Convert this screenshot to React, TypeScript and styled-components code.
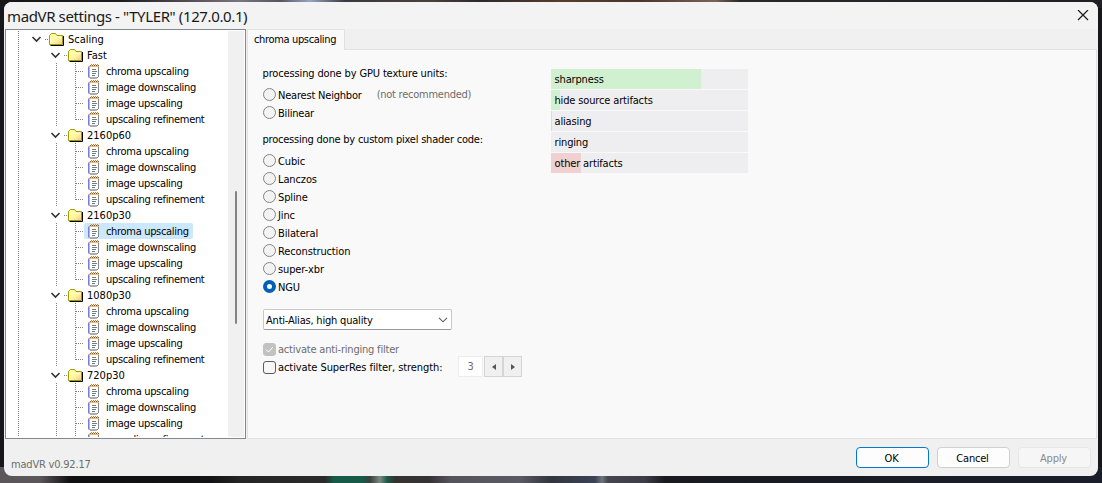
import React from "react";
import styled, { createGlobalStyle } from "styled-components";

const GlobalStyle = createGlobalStyle`
  * { box-sizing: border-box; }
  html, body { margin: 0; height: 100%; overflow: hidden; }
  body {
    background:
      linear-gradient(90deg, #17171a 0, #1c1c1e 120px, #5d5560 200px, #7a7480 240px, #55555f 280px, #98a4c4 310px, #3a3a3e 345px, #4a3f3b 430px, #2c2a2c 480px, #5a3a2c 560px, #4a342c 640px, #7a6258 715px, #28282b 740px, #202024 1102px) 0 0 / 100% 8px no-repeat,
      linear-gradient(90deg, #5a5659 0, #5a5659 40px, #101013 70px, #121214 210px, #262525 240px, #2a2a2a 325px, #175a48 334px, #175a48 362px, #3a403e 370px, #7a8a80 380px, #1d5a48 387px, #35322f 395px, #363336 430px, #55545c 450px, #5a5a64 520px, #33363f 550px, #3a4254 595px, #70747c 602px, #44454e 608px, #3c3d46 645px, #181a20 665px, #1a1e2a 1102px) 0 100% / 100% 16px no-repeat,
      #17171b;
    font-family: "DejaVu Sans Condensed", "DejaVu Sans", sans-serif;
    font-stretch: condensed;
    font-size: 11px;
    letter-spacing: -0.2px;
    color: #000;
  }
`;

const Desktop = styled.div`
  height: 483px;
  width: 1102px;
  padding: 2px 4px 7px;
`;
const Window = styled.div`
  height: 474px;
  background: #f0f0f0;
  border-radius: 8px;
  overflow: hidden;
  display: flex;
  flex-direction: column;
`;
const TitleBar = styled.header`
  height: 27px;
  flex: none;
  display: flex;
  justify-content: space-between;
  align-items: center;
  padding: 0 9px 0 3px;
  background: #f3f3f3;
`;
const Title = styled.h1`
  margin: 0;
  font: 400 15px/26px "Noto Sans", sans-serif;
  color: #191919;
  white-space: nowrap;
  letter-spacing: -0.38px;
`;
const Body = styled.main`
  display: flex;
  height: 410px;
  flex: none;
  padding-left: 1px;
`;
const Tree = styled.aside`
  width: 241px;
  border: 1px solid #828790;
  background: #fff;
  display: flex;
  overflow: hidden;
  padding: 1px 1px 1px 0;
`;
const TreeRows = styled.div`
  flex: 1;
  overflow: hidden;
`;
const ScrollTrack = styled.div`
  width: 16px;
  background: #f0f0f0;
  padding: 160px 0 0 7px;
`;
const ScrollThumb = styled.div`
  width: 2px;
  height: 133px;
  border-radius: 1px;
  background: #858585;
`;
const Row = styled.div`
  display: flex;
  height: 16px;
`;
const Branches = styled.svg`
  flex: none;
  display: block;
`;
const Caption = styled.span<{ $selected?: boolean; $leaf?: boolean }>`
  display: flex;
  align-items: center;
  height: 16px;
  line-height: 16px;
  padding-right: 4px;
  gap: ${(p) => (p.$leaf ? 6 : 4)}px;
  padding-left: ${(p) => (p.$leaf ? 4 : 0)}px;
  letter-spacing: ${(p) => (p.$leaf ? "-0.32px" : "0")};
  border-radius: 2px;
  white-space: nowrap;
  background: ${(p) => (p.$selected ? "#cce8ff" : "transparent")};
`;
const Label = styled.span`
  padding-top: 2px;
`;
const Content = styled.section`
  flex: 1;
  display: flex;
  flex-direction: column;
  padding: 0 1px 0 1px;
`;
const Tab = styled.div`
  width: 98px;
  height: 21px;
  flex: none;
  margin-bottom: -1px;
  z-index: 1;
  padding-left: 6px;
  line-height: 20px;
  letter-spacing: -0.35px;
  white-space: nowrap;
  background: #f9f9f9;
  border: 1px solid #e2e2e2;
  border-bottom: 0;
`;
const Panel = styled.div`
  flex: 1;
  background: #f9f9f9;
  border: 1px solid #e2e2e2;
  display: flex;
  padding: 15px 14px 15px 15px;
`;
const Options = styled.div`
  width: 288px;
  flex: none;
`;
const Heading = styled.div<{ $spacing: number }>`
  height: 20px;
  line-height: 17px;
  white-space: nowrap;
  margin-left: -0.5px;
  letter-spacing: ${(p) => p.$spacing}px;
`;
const Group = styled.div<{ $gap: number }>`
  margin-bottom: ${(p) => p.$gap}px;
`;
const Choice = styled.div<{ $disabled?: boolean; $spacing?: number }>`
  display: flex;
  align-items: center;
  height: 18px;
  gap: 2px;
  white-space: nowrap;
  letter-spacing: ${(p) => p.$spacing ?? -0.2}px;
  color: ${(p) => (p.$disabled ? "#6d6d6d" : "#000")};
`;
const RadioDot = styled.span<{ $on?: boolean }>`
  width: 13px;
  height: 13px;
  flex: none;
  border-radius: 50%;
  border: ${(p) => (p.$on ? "4px solid #005fb8" : "1px solid #858585")};
  background: ${(p) => (p.$on ? "#fff" : "#f3f3f3")};
`;
const Hint = styled.span`
  color: #6d6d6d;
  margin-left: 13px;
  letter-spacing: -0.25px;
`;
const Select = styled.div`
  width: 189px;
  height: 21px;
  border: 1px solid #c8c8c8;
  border-bottom-color: #9a9a9a;
  border-radius: 2px;
  background: #fff;
  display: flex;
  align-items: center;
  justify-content: space-between;
  padding: 0 3px 0 2px;
  margin-bottom: 10px;
`;
const CheckMark = styled.span<{ $disabled?: boolean }>`
  width: 13px;
  height: 13px;
  flex: none;
  display: grid;
  place-items: center;
  border-radius: 3px;
  border: 1px solid ${(p) => (p.$disabled ? "#c2c2c2" : "#5c5c5c")};
  background: ${(p) => (p.$disabled ? "#c2c2c2" : "#f7f7f7")};
`;
const Strength = styled.div`
  display: flex;
  height: 22px;
  margin-left: auto;
  margin-right: 29px;
`;
const StrengthValue = styled.div`
  width: 25px;
  height: 21px;
  border: 1px solid #ececec;
  background: #fff;
  color: #6d6d6d;
  text-align: center;
  line-height: 19px;
  margin-right: 1px;
`;
const StepButton = styled.div`
  width: 19px;
  height: 21px;
  border: 1px solid #d5d5d5;
  background: #f0f0f0;
  display: grid;
  place-items: center;
`;
const Meters = styled.div`
  width: 197px;
  display: flex;
  flex-direction: column;
  gap: 1px;
  padding-top: 4px;
`;
const Meter = styled.div<{ $fill: number; $color: string }>`
  height: 20px;
  line-height: 22px;
  padding-left: 3.5px;
  letter-spacing: -0.15px;
  background: linear-gradient(${(p) => p.$color}, ${(p) => p.$color}) 0 0 / ${(p) => p.$fill}px 100% no-repeat #eeeef0;
`;
const Footer = styled.footer`
  flex: 1;
  display: flex;
  padding: 8px 7px 0 7px;
  gap: 8px;
`;
const Version = styled.span`
  color: #6d6d6d;
  margin-right: auto;
  line-height: 35px;
`;
const Button = styled.button<{ $kind?: "default" | "disabled" }>`
  width: 73px;
  height: 21px;
  padding: 1px 2px 0 0;
  font: inherit;
  letter-spacing: inherit;
  border-radius: 4px;
  background: ${(p) => (p.$kind === "disabled" ? "#f6f6f6" : "#fdfdfd")};
  color: ${(p) => (p.$kind === "disabled" ? "#8a8a8a" : "#000")};
  border: 1px solid ${(p) => (p.$kind === "default" ? "#0078d4" : p.$kind === "disabled" ? "#e6e6e6" : "#d0d0d0")};
`;

const Close = () => (
  <svg width="12" height="12" viewBox="0 0 12 12">
    <path d="M1 0 11 10M11 0 1 10" stroke="#191919" strokeWidth="1.2" />
  </svg>
);

const Icon = styled.svg`
  flex: none;
  display: block;
`;

const Folder = () => (
  <Icon width="15" height="13" viewBox="0 0 15 13">
    <defs>
      <linearGradient id="fold" x1="0" y1="0" x2="1" y2="1">
        <stop offset="0.2" stopColor="#ffff9c" />
        <stop offset="0.6" stopColor="#fff2a0" />
        <stop offset="1" stopColor="#f5c48a" />
      </linearGradient>
    </defs>
    <path d="M1.5 12.5H14.5V3" fill="none" stroke="#000" />
    <path d="M.5 11.5V2.5L2.5.5H6.5L8 2.5H13.5V11.5Z" fill="url(#fold)" stroke="#a09a00" />
    <path d="M1.5 10.5V4.5H12.5" fill="none" stroke="#ffffd0" />
  </Icon>
);

const Note = () => (
  <Icon width="12" height="15" viewBox="0 0 12 15">
    <path d="M1.5 2H10.5V12.5L9 14H1.5Z" fill="#fff" stroke="#a9adb0" />
    <path d="M10.5 2V12.5L9 14H2" fill="none" stroke="#83878b" />
    <path d="M.5 2.5V13.5" stroke="#7c7cd0" />
    <path d="M1.5 2.5V13.5" stroke="#b4b4ea" />
    <path d="M2 2.5H11" stroke="#e8b968" />
    <path d="M2 1.5H11" stroke="#8a5a20" strokeDasharray="1 1" />
    <path d="M3 .5H11" stroke="#c98a3a" strokeDasharray="1 1" />
    <path d="M4 5.5H8M4 7.5H9M4 9.5H8M4 11.5H7" stroke="#6d7c80" />
  </Icon>
);

const dots = { stroke: "#808080", strokeDasharray: "1 1", shapeRendering: "crispEdges" as const };

const FolderRow = ({ label, depth }: { label: string; depth: number }) => {
  const w = depth ? 62 : 43;
  return (
    <Row>
      <Branches width={w} height="16" viewBox={`0 0 ${w} 16`}>
        <path d="M12.5 0V16" {...dots} />
        <path d={`M${w - 4} 8.5H${w}`} {...dots} />
        <path d={`M${w - 16.5} 6L${w - 12.5} 10L${w - 8.5} 6`} fill="none" stroke="#333" strokeWidth="1.6" />
      </Branches>
      <Caption>
        <Folder />
        <Label>{label}</Label>
      </Caption>
    </Row>
  );
};

const LeafRow = ({ label, last, selected }: { label: string; last: boolean; selected?: boolean }) => (
  <Row>
    <Branches width="78" height="16" viewBox="0 0 78 16">
      <path d="M12.5 0V16M50.5 0V16" {...dots} />
      <path d={`M69.5 0V${last ? 9 : 16}M70 8.5H78`} {...dots} />
    </Branches>
    <Caption $leaf $selected={selected}>
      <Note />
      <Label>{label}</Label>
    </Caption>
  </Row>
);

const leaves = ["chroma upscaling", "image downscaling", "image upscaling", "upscaling refinement"];
const profiles = ["Fast", "2160p60", "2160p30", "1080p30", "720p30"];
const shaders = ["Cubic", "Lanczos", "Spline", "Jinc", "Bilateral", "Reconstruction", "super-xbr", "NGU"];
const meters = [
  { label: "sharpness", fill: 150, color: "#d0f0d0" },
  { label: "hide source artifacts", fill: 9, color: "#d0f0d0" },
  { label: "aliasing", fill: 1, color: "#f0d0d0" },
  { label: "ringing", fill: 0, color: "#f0d0d0" },
  { label: "other artifacts", fill: 30, color: "#f0d0d0" },
];

export default function App() {
  return (
    <Desktop>
      <GlobalStyle />
      <Window>
        <TitleBar>
          <Title>madVR settings - "TYLER" (127.0.0.1)</Title>
          <Close />
        </TitleBar>
        <Body>
          <Tree>
            <TreeRows>
              <FolderRow label="Scaling" depth={0} />
              {profiles.map((name) => (
                <React.Fragment key={name}>
                  <FolderRow label={name} depth={1} />
                  {leaves.map((leaf, i) => (
                    <LeafRow key={leaf} label={leaf} last={i === 3} selected={name === "2160p30" && i === 0} />
                  ))}
                </React.Fragment>
              ))}
            </TreeRows>
            <ScrollTrack>
              <ScrollThumb />
            </ScrollTrack>
          </Tree>
          <Content>
            <Tab>chroma upscaling</Tab>
            <Panel>
              <Options>
                <Heading $spacing={-0.14}>processing done by GPU texture units:</Heading>
                <Group $gap={10}>
                  <Choice>
                    <RadioDot />
                    <Label>Nearest Neighbor</Label>
                    <Hint>(not recommended)</Hint>
                  </Choice>
                  <Choice>
                    <RadioDot />
                    <Label>Bilinear</Label>
                  </Choice>
                </Group>
                <Heading $spacing={-0.22}>processing done by custom pixel shader code:</Heading>
                <Group $gap={14}>
                  {shaders.map((name) => (
                    <Choice key={name} $spacing={-0.12}>
                      <RadioDot $on={name === "NGU"} />
                      <Label>{name}</Label>
                    </Choice>
                  ))}
                </Group>
                <Select>
                  <Label>Anti-Alias, high quality</Label>
                  <svg width="10" height="6" viewBox="0 0 10 6">
                    <path d="M1 .8 5 4.8 9 .8" fill="none" stroke="#5c5c5c" strokeWidth="1.1" />
                  </svg>
                </Select>
                <Choice $disabled>
                  <CheckMark $disabled>
                    <svg width="9" height="7" viewBox="0 0 9 7">
                      <path d="M1 3.5 3.5 6 8 1" fill="none" stroke="#fff" />
                    </svg>
                  </CheckMark>
                  <span>activate anti-ringing filter</span>
                </Choice>
                <Choice $spacing={-0.08}>
                  <CheckMark />
                  <span>activate SuperRes filter, strength:</span>
                  <Strength>
                    <StrengthValue>3</StrengthValue>
                    <StepButton>
                      <svg width="4" height="6" viewBox="0 0 4 6">
                        <path d="M4 0V6L0 3Z" fill="#555" />
                      </svg>
                    </StepButton>
                    <StepButton>
                      <svg width="4" height="6" viewBox="0 0 4 6">
                        <path d="M0 0V6L4 3Z" fill="#555" />
                      </svg>
                    </StepButton>
                  </Strength>
                </Choice>
              </Options>
              <Meters>
                {meters.map((m) => (
                  <Meter key={m.label} $fill={m.fill} $color={m.color}>
                    {m.label}
                  </Meter>
                ))}
              </Meters>
            </Panel>
          </Content>
        </Body>
        <Footer>
          <Version>madVR v0.92.17</Version>
          <Button $kind="default">OK</Button>
          <Button>Cancel</Button>
          <Button $kind="disabled">Apply</Button>
        </Footer>
      </Window>
    </Desktop>
  );
}
